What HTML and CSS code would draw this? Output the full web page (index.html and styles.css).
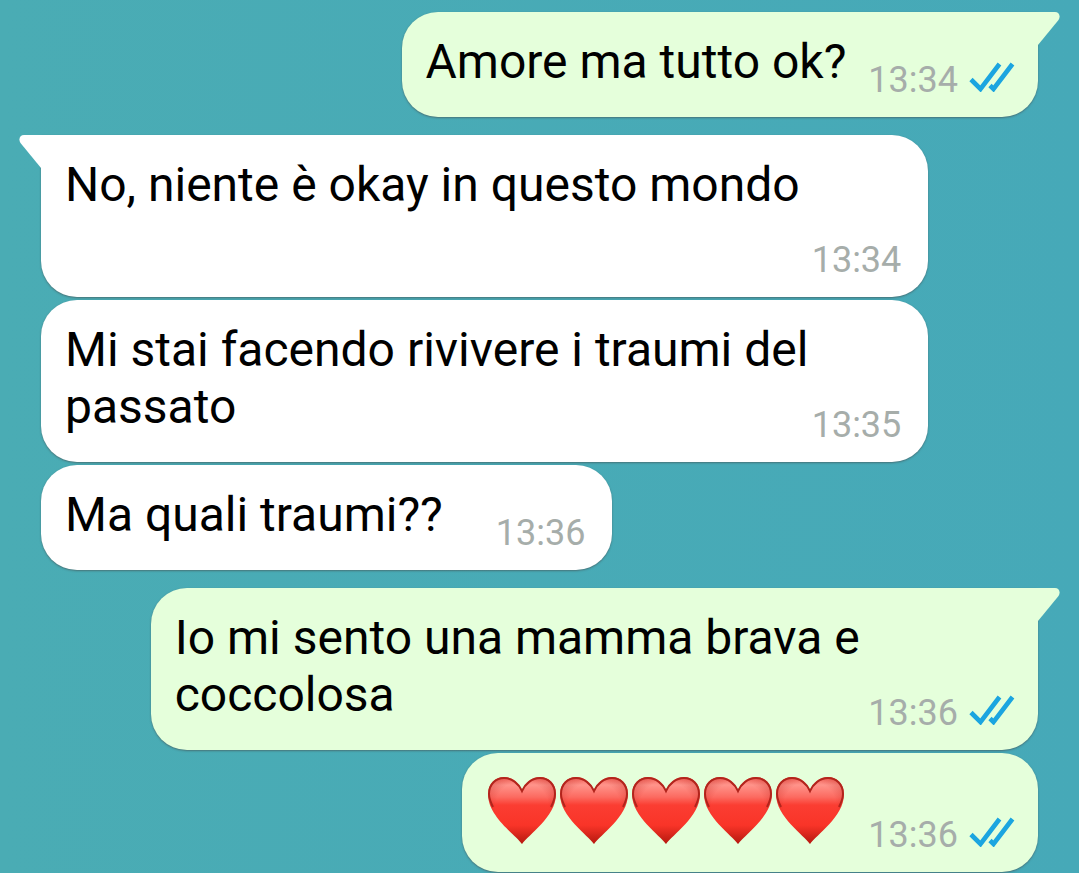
FILE: index.html
```html
<!DOCTYPE html>
<html lang="it">
<head>
    <meta charset="UTF-8">
    <meta name="viewport" content="width=device-width, initial-scale=1.0">
    <title>Chat</title>
    <link rel="stylesheet" href="styles.css">
</head>

<body>

    <!-- shapes used more than once -->
    <svg class="defs" aria-hidden="true">
        <defs>
            <linearGradient id="heartFill" x1="0" y1="0" x2="0" y2="1">
                <stop offset="0" stop-color="#f4665c"/>
                <stop offset="0.12" stop-color="#ff948b"/>
                <stop offset="0.3" stop-color="#fc6a60"/>
                <stop offset="0.42" stop-color="#fb3d32"/>
                <stop offset="0.72" stop-color="#f93428"/>
                <stop offset="1" stop-color="#b81a10"/>
            </linearGradient>
            <radialGradient id="heartEdge" cx="0.5" cy="0.45" r="0.6">
                <stop offset="0.65" stop-color="#b81812" stop-opacity="0"/>
                <stop offset="1" stop-color="#b81812" stop-opacity="0.35"/>
            </radialGradient>
            <symbol id="heart" viewBox="0 0 72 71">
                <path d="M36 70C30 61 2 43 2 20C2 9 10 3 18 3C27 3 33 9 36 16C39 9 45 3 54 3C62 3 70 9 70 20C70 43 42 61 36 70Z" fill="url(#heartFill)"/>
                <path d="M36 70C30 61 2 43 2 20C2 9 10 3 18 3C27 3 33 9 36 16C39 9 45 3 54 3C62 3 70 9 70 20C70 43 42 61 36 70Z" fill="url(#heartEdge)"/>
                <path d="M7 33C4 27 3 24 3 20C3 10 10 4 18 4C26 4 33 10 36 17C39 10 46 4 54 4C62 4 69 10 69 20C69 24 68 27 65 33" fill="none" stroke="#b2241c" stroke-width="2"/>
            </symbol>
            <symbol id="ticks" viewBox="0 0 46 30">
                <path d="M2 17.5L11.5 27L30.5 2M21 23.5L24.5 27L43.5 2" fill="none" stroke="#1ba5e0" stroke-width="4.6"/>
            </symbol>
            <symbol id="tail" viewBox="0 0 22 34">
                <path d="M0 0H17C21 0 23 4 20.5 8L0 33Z"/>
            </symbol>
        </defs>
    </svg>

    <main class="chat">
        <div class="group sent">
            <div class="bubble first">Amore ma tutto ok?<span class="meta"><time>13:34</time><svg class="ticks" role="img" aria-label="Letto"><use href="#ticks"/></svg></span>
                <svg class="tail" aria-hidden="true"><use href="#tail"/></svg>
            </div>
        </div>

        <div class="group received">
            <div class="bubble first">No, niente è okay in questo mondo<span class="meta"><time>13:34</time></span>
                <svg class="tail" aria-hidden="true"><use href="#tail"/></svg>
            </div>
            <div class="bubble">Mi stai facendo rivivere i traumi del passato<span class="meta"><time>13:35</time></span></div>
            <div class="bubble">Ma quali traumi??<span class="meta"><time>13:36</time></span></div>
        </div>

        <div class="group sent">
            <div class="bubble first">Io mi sento una mamma brava e coccolosa<span class="meta"><time>13:36</time><svg class="ticks" role="img" aria-label="Letto"><use href="#ticks"/></svg></span>
                <svg class="tail" aria-hidden="true"><use href="#tail"/></svg>
            </div>
            <div class="bubble emoji">
                <span class="hearts" role="img" aria-label="Cinque cuori rossi">
                    <svg class="heart"><use href="#heart"/></svg>
                    <svg class="heart"><use href="#heart"/></svg>
                    <svg class="heart"><use href="#heart"/></svg>
                    <svg class="heart"><use href="#heart"/></svg>
                    <svg class="heart"><use href="#heart"/></svg>
                </span>
                <span class="meta"><time>13:36</time><svg class="ticks" role="img" aria-label="Letto"><use href="#ticks"/></svg></span>
            </div>
        </div>
    </main>

</body>

</html>
```

FILE: styles.css
```css
body {
    margin: 0;
    background: linear-gradient(to right, #4aacb4, #46a9b8);
    font-family: Roboto, Arial, sans-serif;
    font-size: 48px;
    line-height: 57px;
    color: #000;
}
.defs {
    position: absolute;
    width: 0;
    height: 0;
}
.chat {
    display: flex;
    flex-direction: column;
    gap: 18px;
    padding: 12px 41px 1px;
}
.group {
    display: flex;
    flex-direction: column;
    gap: 3px;
    align-items: flex-start;
}
.group.sent {
    align-items: flex-end;
}
.bubble {
    position: relative;
    display: flow-root;
    box-sizing: border-box;
    max-width: 89%;
    padding: 21px 23px 16px 24px;
    border-radius: 36px;
    background-color: #fff;
    box-shadow: 0 1px 2px rgba(70, 60, 60, 0.5);
}
.sent .bubble {
    background-color: #e5ffdb;
}
.received .first {
    border-top-left-radius: 0;
}
.sent .first {
    border-top-right-radius: 0;
}

/* the time drops to its own line when the last line has no room */
.meta {
    float: right;
    display: flex;
    align-items: center;
    gap: 11px;
    margin-top: 26px;
    margin-left: 22px;
    font-size: 36px;
    line-height: 42px;
    color: #a6adaa;
}
.received .meta {
    margin-left: 53px;
    margin-right: 4px;
}
.ticks {
    width: 46px;
    height: 30px;
    margin-bottom: 6px;
}

/* corner pointing to the edge of the screen */
.tail {
    position: absolute;
    top: 0;
    width: 22px;
    height: 34px;
    fill: #fff;
}
.sent .tail {
    left: 100%;
    fill: #e5ffdb;
}
.received .tail {
    right: 100%;
    transform: scaleX(-1);
}

.emoji {
    display: flex;
    align-items: flex-end;
}
.hearts {
    display: flex;
    margin-bottom: 11px;
}
.heart {
    width: 72px;
    height: 71px;
}
```
